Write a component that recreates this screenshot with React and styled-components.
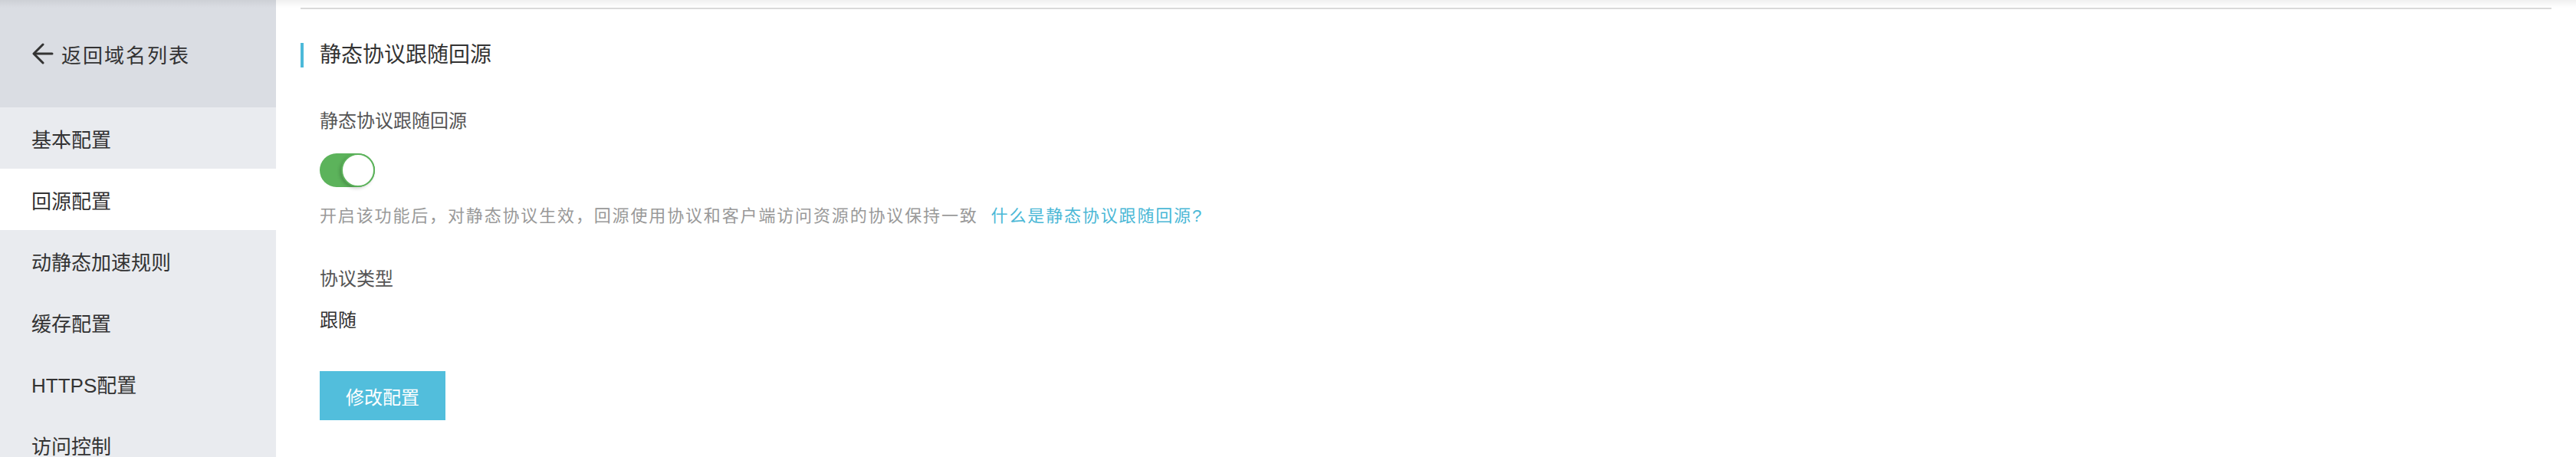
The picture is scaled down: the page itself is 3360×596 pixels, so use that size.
import React from "react";
import styled, { createGlobalStyle } from "styled-components";

const Global = createGlobalStyle`
  html, body { margin: 0; padding: 0; background: #fff; }
  body {
    font-family: "Liberation Sans", "Noto Sans CJK SC", sans-serif;
    color: #333;
  }
`;

const Page = styled.div`
  position: relative;
  display: flex;
  align-items: flex-start;
  width: 3360px;
  height: 596px;
  overflow: hidden;
  background: #fff;
`;

const TopShade = styled.div`
  position: absolute;
  left: 0;
  right: 0;
  top: 0;
  height: 10px;
  background: linear-gradient(to bottom, rgba(0, 0, 0, 0.06), rgba(0, 0, 0, 0));
  pointer-events: none;
`;

const Sidebar = styled.nav`
  flex: 0 0 360px;
  display: flex;
  flex-direction: column;
  background: #e9ebef;
`;

const BackHeader = styled.div`
  flex: 0 0 140px;
  height: 140px;
  display: flex;
  align-items: center;
  gap: 10px;
  padding-left: 42px;
  background: #dadde3;
  font-size: 26px;
  letter-spacing: 2px;
  color: #333;
`;

const NavItem = styled.div`
  flex: 0 0 80px;
  height: 80px;
  display: flex;
  align-items: center;
  padding-left: 41px;
  font-size: 26px;
  color: #333;
  background: ${(p) => (p.$active ? "#fff" : "transparent")};
`;

const Main = styled.main`
  flex: 1;
  padding: 10px 32px 0 32px;
`;

const Panel = styled.section`
  border-top: 2px solid #d9d9d9;
  display: flex;
  flex-direction: column;
  align-items: flex-start;
`;

const SectionTitle = styled.h2`
  margin: 44px 0 0 0;
  height: 32px;
  line-height: 32px;
  border-left: 4px solid #4cb9d9;
  padding-left: 21px;
  font-size: 28px;
  font-weight: normal;
  color: #333;
`;

const Field = styled.div`
  padding-left: 25px;
  display: flex;
  flex-direction: column;
  align-items: flex-start;
`;

const Label = styled.div`
  margin-top: ${(p) => p.$mt}px;
  line-height: 32px;
  font-size: 24px;
  color: #555;
`;

const Value = styled.div`
  margin-top: 22px;
  line-height: 32px;
  font-size: 24px;
  color: #333;
`;

const Toggle = styled.div`
  margin-top: 26px;
  width: 72px;
  height: 44px;
  border-radius: 22px;
  background: #5cb35b;
  display: flex;
  justify-content: flex-end;
`;

const Knob = styled.div`
  width: 44px;
  height: 44px;
  box-sizing: border-box;
  border-radius: 50%;
  background: #fff;
  border: 2px solid #5cb35b;
  box-shadow: -2px 2px 4px rgba(0, 0, 0, 0.18);
`;

const Help = styled.div`
  margin-top: 22px;
  line-height: 32px;
  font-size: 22px;
  letter-spacing: 1.85px;
  color: #999;
`;

const HelpLink = styled.a`
  margin-left: 17px;
  color: #4bb8d6;
  text-decoration: none;
`;

const Button = styled.button`
  margin-top: 50px;
  width: 164px;
  height: 64px;
  border: none;
  border-radius: 0;
  background: #52bedc;
  color: #fff;
  font-family: "Liberation Sans", "Noto Sans CJK SC", sans-serif;
  font-size: 24px;
  padding: 0;
`;

const BackArrow = () => (
  <svg width="28" height="28" viewBox="0 0 28 28" fill="none" stroke="#333" strokeWidth="3" strokeLinecap="round" strokeLinejoin="round">
    <path d="M26 14H3" />
    <path d="M14 2 2 14l12 12" />
  </svg>
);

const navItems = ["基本配置", "回源配置", "动静态加速规则", "缓存配置", "HTTPS配置", "访问控制"];

export default function App() {
  return (
    <Page>
      <Global />
      <Sidebar>
        <BackHeader>
          <BackArrow />
          <span>返回域名列表</span>
        </BackHeader>
        {navItems.map((t) => (
          <NavItem key={t} $active={t === "回源配置"}>
            {t}
          </NavItem>
        ))}
      </Sidebar>
      <Main>
        <Panel>
          <SectionTitle>静态协议跟随回源</SectionTitle>
          <Field>
            <Label $mt={54}>静态协议跟随回源</Label>
            <Toggle>
              <Knob />
            </Toggle>
            <Help>
              开启该功能后，对静态协议生效，回源使用协议和客户端访问资源的协议保持一致
              <HelpLink href="#">什么是静态协议跟随回源?</HelpLink>
            </Help>
            <Label $mt={50}>协议类型</Label>
            <Value>跟随</Value>
            <Button>修改配置</Button>
          </Field>
        </Panel>
      </Main>
      <TopShade />
    </Page>
  );
}
